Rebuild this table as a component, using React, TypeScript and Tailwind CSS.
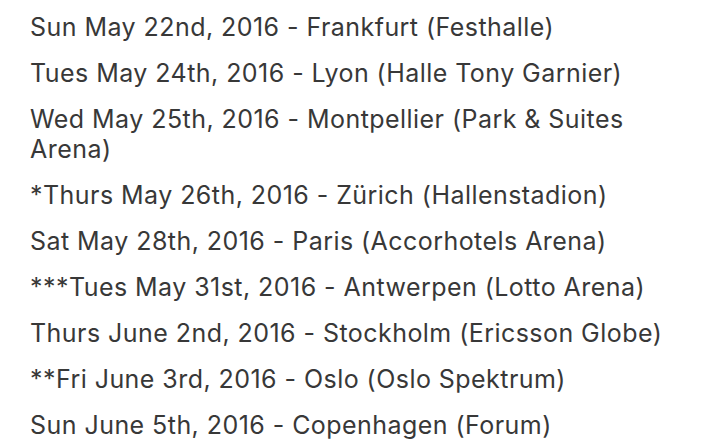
const shows = [
  "Sun May 22nd, 2016 - Frankfurt (Festhalle)",
  "Tues May 24th, 2016 - Lyon (Halle Tony Garnier)",
  "Wed May 25th, 2016 - Montpellier (Park & Suites Arena)",
  "*Thurs May 26th, 2016 - Zürich (Hallenstadion)",
  "Sat May 28th, 2016 - Paris (Accorhotels Arena)",
  "***Tues May 31st, 2016 - Antwerpen (Lotto Arena)",
  "Thurs June 2nd, 2016 - Stockholm (Ericsson Globe)",
  "**Fri June 3rd, 2016 - Oslo (Oslo Spektrum)",
  "Sun June 5th, 2016 - Copenhagen (Forum)",
];

export default function App() {
  return (
    <div className="w-[712px] h-[440px] overflow-hidden bg-white font-['Inter',sans-serif] text-[#383838]">
      <ul className="flex flex-col gap-[16px] pl-[30px] pr-[40px] pt-[12px] text-[25px] leading-[30px] tracking-[0.45px]">
        {shows.map((s) => (
          <li key={s}>{s}</li>
        ))}
      </ul>
    </div>
  );
}
